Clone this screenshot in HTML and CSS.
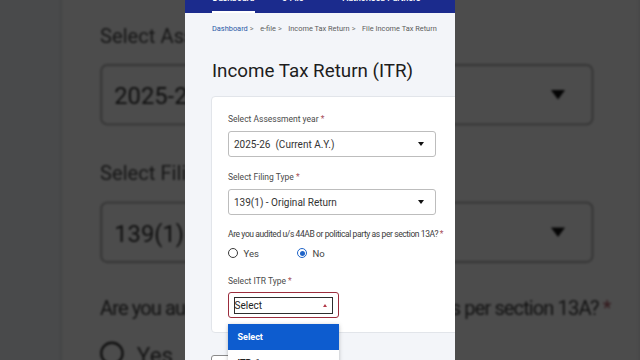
FILE: index.html
```html
<!DOCTYPE html>
<html lang="en">
<head>
<meta charset="utf-8">
<title>Income Tax Return (ITR)</title>
<link rel="stylesheet" href="styles.css">
</head>
<body>
<div class="stage">
  <div class="backdrop" aria-hidden="true">
    <div class="panel">
      <div class="nav">
        <span class="nav-item active">Dashboard</span>
        <span class="nav-item efile">e-File</span>
        <span class="nav-item partners">Authorised Partners</span>
      </div>
      <div class="crumbs">
        <span class="crumb-link">Dashboard</span><span class="crumb-sep">&gt;</span>
        <span>e-file</span><span class="crumb-sep">&gt;</span>
        <span>Income Tax Return</span><span class="crumb-sep">&gt;</span>
        <span>File Income Tax Return</span>
      </div>
      <h1 class="title">Income Tax Return (ITR)</h1>
      <div class="card">
        <div class="label">Select Assessment year <span class="req">*</span></div>
        <div class="select"><span class="val">2025-26  (Current A.Y.)</span><span class="caret"></span></div>
        <div class="label gap">Select Filing Type <span class="req">*</span></div>
        <div class="select"><span class="val">139(1) - Original Return</span><span class="caret"></span></div>
        <div class="label question">Are you audited u/s 44AB or political party as per section 13A? <span class="req">*</span></div>
        <div class="radio-row">
          <span class="radio"><span class="dot"></span>Yes</span>
          <span class="radio"><span class="dot on"></span>No</span>
        </div>
        <div class="label gap3">Select ITR Type <span class="req">*</span></div>
        <div class="itr">
          <div class="itr-inner"><span>Select</span><span class="caret-up"></span></div>
        </div>
      </div>
      <div class="actions"><span class="btn">Back</span></div>
    </div>
  </div>

  <div class="panel front">
    <div class="nav">
      <span class="nav-item active">Dashboard</span>
      <span class="nav-item efile">e-File</span>
      <span class="nav-item partners">Authorised Partners</span>
    </div>
    <div class="crumbs">
      <span class="crumb-link">Dashboard</span><span class="crumb-sep">&gt;</span>
      <span>e-file</span><span class="crumb-sep">&gt;</span>
      <span>Income Tax Return</span><span class="crumb-sep">&gt;</span>
      <span>File Income Tax Return</span>
    </div>
    <h1 class="title">Income Tax Return (ITR)</h1>
    <div class="card">
      <div class="label">Select Assessment year <span class="req">*</span></div>
      <div class="select"><span class="val">2025-26  (Current A.Y.)</span><span class="caret"></span></div>
      <div class="label gap">Select Filing Type <span class="req">*</span></div>
      <div class="select"><span class="val">139(1) - Original Return</span><span class="caret"></span></div>
      <div class="label question">Are you audited u/s 44AB or political party as per section 13A? <span class="req">*</span></div>
      <div class="radio-row">
        <span class="radio"><span class="dot"></span>Yes</span>
        <span class="radio"><span class="dot on"></span>No</span>
      </div>
      <div class="label gap3">Select ITR Type <span class="req">*</span></div>
      <div class="itr">
        <div class="itr-inner"><span>Select</span><span class="caret-up"></span></div>
        <div class="menu">
          <div class="opt selected">Select</div>
          <div class="opt">ITR-1</div>
          <div class="opt">ITR-2</div>
        </div>
      </div>
    </div>
    <div class="actions"><span class="btn">Back</span></div>
  </div>
</div>
</body>
</html>
```

FILE: styles.css
```css
html, body {
  margin: 0;
  padding: 0;
}

.stage {
  position: relative;
  width: 640px;
  height: 360px;
  overflow: hidden;
  background: #474747;
  display: flex;
  justify-content: center;
}

.backdrop {
  position: absolute;
  left: -2px;
  top: -247px;
  transform: scale(2.373);
  transform-origin: 0 0;
  filter: brightness(0.3) blur(0.35px);
}

.panel {
  width: 270px;
  height: 360px;
  flex: none;
  background: #f3f5f9;
  overflow: hidden;
  font-family: Roboto, "Liberation Sans", sans-serif;
  color: #333;
}

.front {
  position: relative;
  z-index: 1;
}

.nav {
  height: 13px;
  background: #1b2b8d;
  display: flex;
  padding-left: 27px;
  overflow: hidden;
}

.nav-item {
  margin-top: -8px;
  height: 21px;
  box-sizing: border-box;
  color: #fff;
  font-size: 8.7px;
  line-height: 12px;
  font-weight: 500;
  white-space: nowrap;
}

.nav-item.active {
  width: 43px;
  text-align: center;
  border-bottom: 2px solid #fff;
}

.nav-item.efile {
  margin-left: 27px;
}

.nav-item.partners {
  margin-left: 39px;
}

.crumbs {
  display: flex;
  margin: 11px 0 0 27px;
  font-size: 7.4px;
  line-height: 10px;
  color: #5c5c5c;
  white-space: nowrap;
}

.crumb-link {
  color: #2b5aa6;
}

.crumb-sep {
  margin: 0 6.5px 0 2px;
  color: #777;
}

.title {
  margin: 25px 0 0 27px;
  font-size: 18.8px;
  line-height: 24px;
  font-weight: 400;
  color: #1d1d1d;
  white-space: nowrap;
}

.card {
  margin: 13px 0 0 26px;
  width: 262px;
  box-sizing: border-box;
  background: #fff;
  border: 1px solid #e2e5ea;
  border-radius: 4px;
  padding: 16px 16px 14px 16px;
}

.label {
  font-size: 8.5px;
  line-height: 12px;
  color: #4a4a4a;
  white-space: nowrap;
}

.label.gap {
  margin-top: 14px;
}

.label.question {
  margin-top: 13px;
  letter-spacing: -0.4px;
  color: #3c3c3c;
}

.label.gap3 {
  margin-top: 16px;
}

.req {
  color: #a8505a;
}

.select {
  margin-top: 6px;
  width: 208px;
  height: 26px;
  box-sizing: border-box;
  border: 1px solid #bdbdbd;
  border-radius: 3px;
  display: flex;
  align-items: center;
  justify-content: space-between;
  padding: 0 11px 0 5px;
  font-size: 10px;
  color: #333;
}

.val {
  white-space: pre;
}

.caret {
  width: 0;
  height: 0;
  border-left: 3.5px solid transparent;
  border-right: 3.5px solid transparent;
  border-top: 4px solid #111;
}

.radio-row {
  display: flex;
  align-items: center;
  height: 12px;
  margin-top: 7px;
}

.radio {
  display: flex;
  align-items: center;
  gap: 5.5px;
  width: 69px;
  font-size: 9.5px;
  color: #444;
}

.dot {
  width: 10px;
  height: 10px;
  box-sizing: border-box;
  border: 1.2px solid #3a3a3a;
  border-radius: 50%;
  display: grid;
  place-items: center;
}

.dot.on {
  border-color: #1f64c8;
}

.dot.on::after {
  content: "";
  width: 5px;
  height: 5px;
  border-radius: 50%;
  background: #1f64c8;
}

.itr {
  position: relative;
  margin-top: 5px;
  width: 111px;
  height: 26px;
  box-sizing: border-box;
  border: 1.5px solid #9b2c3c;
  border-radius: 3px;
  padding: 4px 5.5px 0 4.5px;
}

.itr-inner {
  height: 17px;
  box-sizing: border-box;
  border: 1px solid #2d2d2d;
  display: flex;
  align-items: center;
  justify-content: space-between;
  padding-right: 5px;
  font-size: 10px;
  color: #222;
}

.caret-up {
  width: 0;
  height: 0;
  border-left: 2.5px solid transparent;
  border-right: 2.5px solid transparent;
  border-bottom: 3px solid #b33a48;
}

.menu {
  position: absolute;
  left: -1.5px;
  top: 30.5px;
  width: 111px;
  background: #fff;
  box-shadow: 0 1px 4px rgba(0, 0, 0, 0.25);
  z-index: 2;
}

.opt {
  height: 26px;
  line-height: 26px;
  padding-left: 10px;
  font-size: 9px;
  font-weight: 700;
  color: #222;
}

.opt.selected {
  background: #0d5ccf;
  color: #fff;
}

.actions {
  margin: 21px 0 0 26px;
}

.btn {
  display: inline-block;
  width: 60px;
  height: 22px;
  box-sizing: border-box;
  border: 1px solid #8a8a8a;
  border-radius: 3px;
  background: #fff;
  font-size: 9px;
  line-height: 20px;
  text-align: center;
  color: #333;
}
```
